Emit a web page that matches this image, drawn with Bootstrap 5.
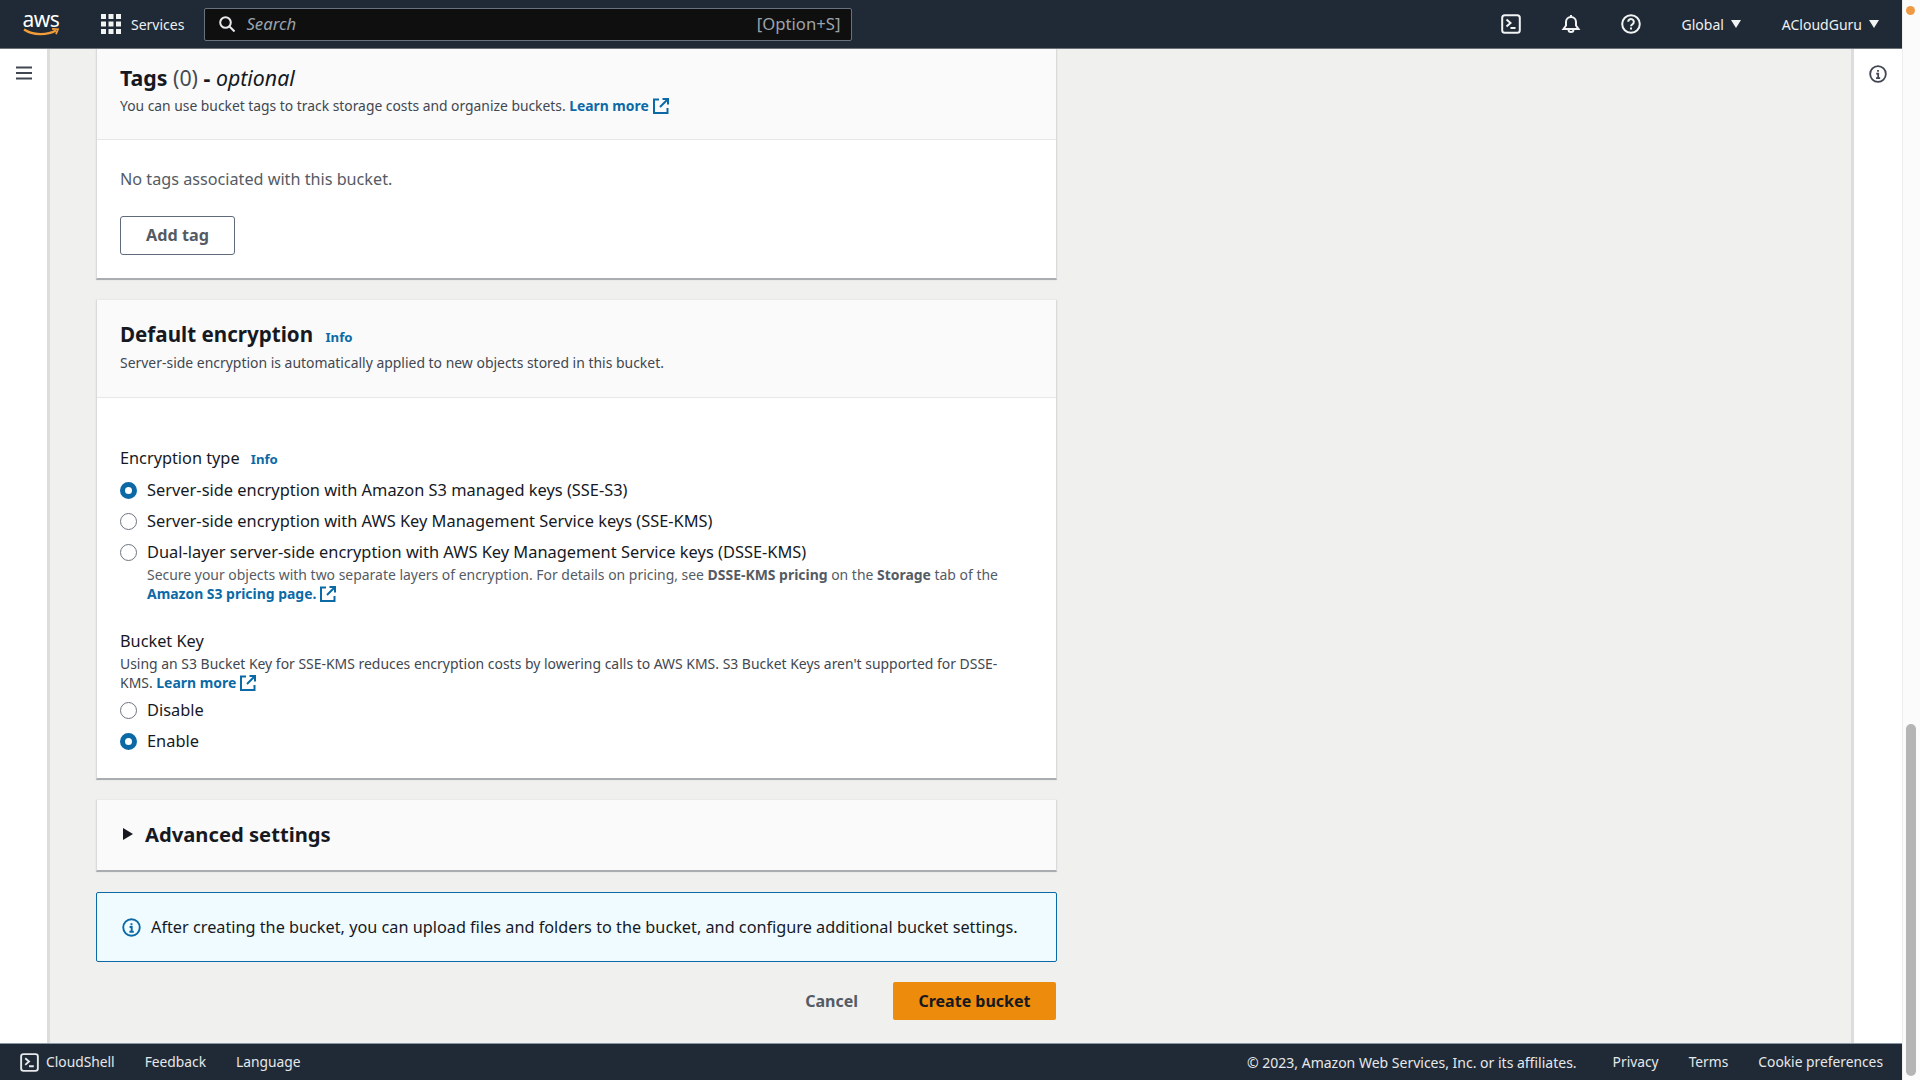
<!DOCTYPE html>
<html lang="en">
<head>
<meta charset="utf-8">
<title>Create bucket</title>
<link href="https://cdn.jsdelivr.net/npm/bootstrap@5.3.0/dist/css/bootstrap.min.css" rel="stylesheet">
<style>
html,body{height:100%;overflow:hidden}
body{font-family:"Noto Sans","Liberation Sans",sans-serif;font-size:16px;color:#16191f;background:#fff;letter-spacing:0}
.shell{height:1080px}
.app{width:1902px;height:1080px}
.sbar{width:18px;background:#fbfbfb;border-left:1px solid #eee}
.sdot{width:9px;height:9px;border-radius:50%;background:#ee9a45;margin:6px 0 0 3px}
.sthumb{width:10px;height:352px;margin:0 0 4px 3px;border-radius:5px;background:#b5b5b5}
.topbar{height:49px;background:#1f2a36;color:#eef0f1;border-bottom:1px solid #6d7278;padding:0 23px 0 22px;flex:none}
.logo{width:38px;line-height:1;margin-right:41px}
.logo-t{font-size:21px;line-height:17px;display:block;text-align:center;color:#fff;letter-spacing:-.5px}
.svc{font-size:14px;gap:10px;margin-right:20px}
.sbox{width:648px;height:33px;background:#0f0f10;border:1px solid #69737f;border-radius:2px;padding:0 11px 0 14px;color:#9ba3ab;font-size:16.7px}
.sbox i{margin-left:11px}
.navright{font-size:14px;gap:40px}
.capt{gap:7px}
.navgap{margin-left:1px}
.caret{width:0;height:0;border-left:5.5px solid transparent;border-right:5.5px solid transparent;border-top:8px solid #f2f3f3;display:inline-block}
.mid{min-height:0}
.rail{background:#fff;flex:none}
.rail-l{width:50px;border-right:3px solid #dcdddc}
.rail-l svg{margin-top:1px}
.rail-r{width:51px;border-left:3px solid #dcdddc}
.stage{background:#f0f1ef;padding:0 0 0 46px;min-width:0}
.col-main{width:961px}
.pane{border:0;border-radius:0;border-left:1px solid #d9dada;border-right:1px solid #d9dada;border-bottom:2px solid #a9adb0;box-shadow:0 0 2px rgba(0,0,0,.08);background:#fff;margin-bottom:20px}
.pane .card-header{background:#fafafa;border-bottom:1px solid #e6e7e7;border-radius:0;padding:0 23px}
.head1{height:91px;padding-top:11px!important}
.head2{height:98px;padding-top:16px!important}
.ttl{font-size:20.6px;font-weight:700;line-height:36px;margin:0;color:#16191f}
.ttl1{font-size:21.3px}
.ttl span{font-weight:400;color:#444b52}
.ttl em{font-weight:400;color:#16191f}
.ttl b{font-weight:700}
.sub{font-size:13.95px;line-height:19px;color:#414750;margin:-2px 0 0}
.sub1{margin-top:0;font-size:13.85px}
.lnk{color:#0b6aa6;font-weight:700;text-decoration:none}
.info{font-size:13.2px;margin-left:7px}
.ext{width:18px;height:18px;vertical-align:-4px;margin-left:3px}
.b1{height:138px;padding:28px 23px 0}
.b1 p{font-size:16.2px;line-height:22px;margin:0 0 26px;color:#545b64}
.addb{width:115px;height:39px;border:1.5px solid #5f6b7a;border-radius:3px;font-weight:700;font-size:16.2px;color:#545b64;background:#fff;padding:0}
.b2{height:380px;padding:48px 23px 0}
.lab{font-size:16.3px;line-height:24px;color:#16191f}
.rowr{min-height:31.3px;margin:0;padding:0 0 0 27px;font-size:16.4px;display:flex;align-items:center;color:#16191f}
.rfirst{margin-top:3.5px}
.rowr .form-check-input{width:17px;height:17px;margin:0 10px 0 -27px;flex:none;border:1.5px solid #6d7580;background-color:#fff}
.rowr .form-check-input:checked{background-color:#fff;border:5px solid #0b6aa6;background-image:none}
.hint{font-size:13.95px;line-height:19px;color:#545b64;margin:-3px 0 0;padding-left:27px}
.hint2{padding-left:0;color:#414750;margin:1.5px 0 2px}
.bk{margin-top:25.500px}
.adv{height:70px;padding:0 0 2px 26px;background:#fafafa;font-size:20.2px;font-weight:700;gap:12px}
.tri{width:0;height:0;border-top:6px solid transparent;border-bottom:6px solid transparent;border-left:10px solid #16191f}
.flash{height:70px;border:1px solid #0b6aa6;border-radius:2px;background:#f0fbff;margin:4.5px 0 20px;padding:0 0 0 25px;font-size:16.25px;gap:10px;color:#16191f}
.acts{height:38px;gap:35px;padding-right:1px}
.canc{color:#545b64;font-weight:700;font-size:16px;text-decoration:none}
.crea{width:163px;height:38px;background:#ec8b0c;border:0;border-radius:2px;color:#16191f;font-weight:700;font-size:16px;padding:0}
.foot{height:37px;background:#1f2a36;color:#e6e8ea;flex:none;border-top:1px solid #8a96a3;font-size:13.8px;padding:0 19px 0 20px}
.foot a,.navright a{color:inherit;text-decoration:none}
.gl{gap:30px}
.gshell{gap:7px}
.copy{margin-right:6px;font-size:14px}
</style>
</head>
<body>
<svg width="0" height="0" class="position-absolute">
<symbol id="shell" viewBox="0 0 20 20"><rect x="1.2" y="1.2" width="17.6" height="17.6" rx="2.5" fill="none" stroke="currentColor" stroke-width="2"/><path d="M5.5 5.5l4 3.5-4 3.5M9.5 14h5" fill="none" stroke="currentColor" stroke-width="2"/></symbol>
<symbol id="ext" viewBox="0 0 18 18"><path d="M7 2.500H2v13.500h13.500V11M10.500 2H16v5.500M16 2l-8 8" fill="none" stroke="currentColor" stroke-width="2"/></symbol>
</svg>
<div class="shell d-flex">
<div class="app d-flex flex-column">
<header class="topbar d-flex align-items-center position-relative">
  <div class="logo"><span class="logo-t">aws</span>
    <svg width="38" height="9" viewBox="0 0 38 9" class="d-block"><path d="M2 1.500c9 6 23 6 32 1" fill="none" stroke="#f29d38" stroke-width="2.2"/><path d="M30 .8l6 .4-2 5" fill="none" stroke="#f29d38" stroke-width="1.8"/></svg></div>
  <div class="svc d-flex align-items-center">
    <svg width="20" height="20" viewBox="0 0 20 20" fill="#f2f3f3"><rect width="5" height="5"/><rect x="7.500" width="5" height="5"/><rect x="15" width="5" height="5"/><rect y="7.500" width="5" height="5"/><rect x="7.500" y="7.500" width="5" height="5"/><rect x="15" y="7.500" width="5" height="5"/><rect y="15" width="5" height="5"/><rect x="7.500" y="15" width="5" height="5"/><rect x="15" y="15" width="5" height="5"/></svg>
    <span>Services</span></div>
  <div class="sbox d-flex align-items-center">
    <svg width="16" height="16" viewBox="0 0 16 16" fill="none" stroke="#e8eaec" stroke-width="2"><circle cx="6.500" cy="6.500" r="5.300"/><path d="M10.500 10.500l5 5"/></svg>
    <i>Search</i><span class="ms-auto">[Option+S]</span></div>
  <div class="navright ms-auto d-flex align-items-center">
    <svg width="20" height="20" style="color:#f2f3f3"><use href="#shell"/></svg>
    <svg width="20" height="20" viewBox="0 0 20 20" fill="none" stroke="#f2f3f3" stroke-width="2"><path d="M2.500 15l2.500-3.500V8a5 5 0 0 1 10 0v3.500l2.500 3.500zM7.500 15.500a2.500 2.500 0 0 0 5 0M10 3V1"/></svg>
    <svg width="20" height="20" viewBox="0 0 20 20" fill="none" stroke="#f2f3f3" stroke-width="2"><circle cx="10" cy="10" r="8.800"/><path d="M7.200 7.800a2.800 2.800 0 1 1 4.400 2.300c-1 .6-1.600 1-1.600 2.200M10 13.600v2"/></svg>
    <a href="#" class="d-flex align-items-center capt navgap">Global <span class="caret"></span></a>
    <a href="#" class="d-flex align-items-center capt navgap">ACloudGuru <span class="caret"></span></a>
  </div>
</header>
<div class="mid d-flex flex-grow-1">
  <aside class="rail rail-l d-flex justify-content-center pt-3">
    <svg width="18" height="14" viewBox="0 0 18 14" stroke="#414750" stroke-width="2"><path d="M1 1.500h16M1 7h16M1 12.500h16"/></svg>
  </aside>
  <main class="stage flex-grow-1 overflow-hidden">
    <div class="col-main">
      <section class="card pane">
        <div class="card-header head1">
          <h2 class="ttl ttl1">Tags <span>(0)</span> <b>-</b> <em>optional</em></h2>
          <p class="sub sub1">You can use bucket tags to track storage costs and organize buckets. <a href="#" class="lnk">Learn more<svg class="ext"><use href="#ext"/></svg></a></p>
        </div>
        <div class="card-body b1">
          <p>No tags associated with this bucket.</p>
          <button class="btn addb" type="button">Add tag</button>
        </div>
      </section>
      <section class="card pane">
        <div class="card-header head2">
          <h2 class="ttl">Default encryption <a href="#" class="lnk info">Info</a></h2>
          <p class="sub">Server-side encryption is automatically applied to new objects stored in this bucket.</p>
        </div>
        <div class="card-body b2">
          <div class="lab">Encryption type <a href="#" class="lnk info">Info</a></div>
          <div class="form-check rowr rfirst"><input class="form-check-input" type="radio" name="e" checked><label>Server-side encryption with Amazon S3 managed keys (SSE-S3)</label></div>
          <div class="form-check rowr"><input class="form-check-input" type="radio" name="e"><label>Server-side encryption with AWS Key Management Service keys (SSE-KMS)</label></div>
          <div class="form-check rowr"><input class="form-check-input" type="radio" name="e"><label>Dual-layer server-side encryption with AWS Key Management Service keys (DSSE-KMS)</label></div>
          <p class="hint">Secure your objects with two separate layers of encryption. For details on pricing, see <b>DSSE-KMS pricing</b> on the <b>Storage</b> tab of the <a href="#" class="lnk">Amazon S3 pricing page.<svg class="ext"><use href="#ext"/></svg></a></p>
          <div class="lab bk">Bucket Key</div>
          <p class="hint hint2">Using an S3 Bucket Key for SSE-KMS reduces encryption costs by lowering calls to AWS KMS. S3 Bucket Keys aren't supported for DSSE-<br>KMS. <a href="#" class="lnk">Learn more<svg class="ext"><use href="#ext"/></svg></a></p>
          <div class="form-check rowr"><input class="form-check-input" type="radio" name="k"><label>Disable</label></div>
          <div class="form-check rowr"><input class="form-check-input" type="radio" name="k" checked><label>Enable</label></div>
        </div>
      </section>
      <section class="card pane">
        <div class="adv d-flex align-items-center"><span class="tri"></span>Advanced settings</div>
      </section>
      <div class="flash d-flex align-items-center">
        <svg width="19" height="19" viewBox="0 0 20 20" fill="none" stroke="#0b6aa6" stroke-width="2"><circle cx="10" cy="10" r="8.700"/><path d="M10 5.500v2M8 9.500h2.200v5M7.800 14.500h4.600"/></svg>
        <span>After creating the bucket, you can upload files and folders to the bucket, and configure additional bucket settings.</span>
      </div>
      <div class="acts d-flex align-items-center justify-content-end">
        <a href="#" class="canc">Cancel</a>
        <button class="btn crea" type="button">Create bucket</button>
      </div>
    </div>
  </main>
  <aside class="rail rail-r d-flex justify-content-center pt-3">
    <svg width="18" height="18" viewBox="0 0 20 20" fill="none" stroke="#414750" stroke-width="2"><circle cx="10" cy="10" r="8.700"/><path d="M10 5.500v2M8 9.500h2.200v5M7.800 14.500h4.600"/></svg>
  </aside>
</div>
<footer class="foot d-flex align-items-center">
  <div class="d-flex align-items-center gl">
    <a href="#" class="d-flex align-items-center gshell"><svg width="19" height="19"><use href="#shell"/></svg>CloudShell</a>
    <a href="#">Feedback</a><a href="#">Language</a>
  </div>
  <div class="ms-auto d-flex align-items-center gl">
    <span class="copy">© 2023, Amazon Web Services, Inc. or its affiliates.</span>
    <a href="#">Privacy</a><a href="#">Terms</a><a href="#">Cookie preferences</a>
  </div>
</footer>
</div>
<div class="sbar d-flex flex-column justify-content-between">
  <div class="sdot"></div><div class="sthumb"></div>
</div>
</div>
</body>
</html>
